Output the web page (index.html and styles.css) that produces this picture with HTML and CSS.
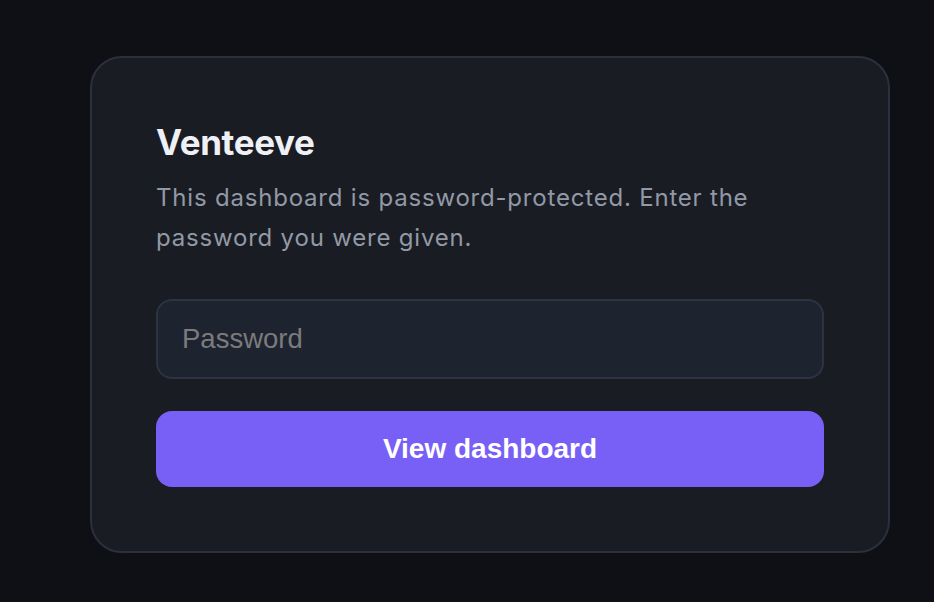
FILE: index.html
```html
<!DOCTYPE html>
<html>
<head>
  <meta charset="utf-8">
  <title>Venteeve</title>
  <link rel="stylesheet" href="styles.css">
</head>
<body>
  <div class="gate">
    <form class="gate-card">
      <h1 class="title">Venteeve</h1>
      <p class="lead">This dashboard is password-protected. Enter the password you were given.</p>
      <input class="field" type="password" placeholder="Password">
      <button class="submit" type="button">View dashboard</button>
    </form>
  </div>
</body>
</html>
```

FILE: styles.css
```css
html, body {
  margin: 0;
  height: 100%;
}
body {
  background: #0e1015;
  font-family: Inter, "Noto Sans", sans-serif;
}

.gate {
  padding: 56px 0 0 90px;
}

.gate-card {
  box-sizing: border-box;
  width: 800px;
  padding: 64px;
  background: #1a1c23;
  border: 2px solid #2c303c;
  border-radius: 32px;
  display: flex;
  flex-direction: column;
}

.title {
  margin: 0 0 16px;
  font-size: 35px;
  line-height: 40px;
  font-weight: 700;
  color: #eef0f6;
  letter-spacing: -0.01em;
}

.lead {
  margin: 0 0 41px;
  font-size: 24px;
  line-height: 40px;
  letter-spacing: 0.8px;
  color: #9299a6;
}

.field {
  box-sizing: border-box;
  height: 80px;
  padding: 0 24px;
  background: #1e2330;
  border: 2px solid #2e3342;
  border-radius: 16px;
  font-family: "Liberation Sans", Arial, sans-serif;
  font-size: 27.5px;
  color: #e6e8ee;
  outline: none;
}
.field::placeholder {
  color: #7b7b7d;
}

.submit {
  margin-top: 32px;
  height: 76px;
  border: 0;
  border-radius: 16px;
  background: #785ff5;
  color: #fff;
  font-family: "Liberation Sans", Arial, sans-serif;
  font-size: 28px;
  font-weight: 700;
  cursor: pointer;
}
```
